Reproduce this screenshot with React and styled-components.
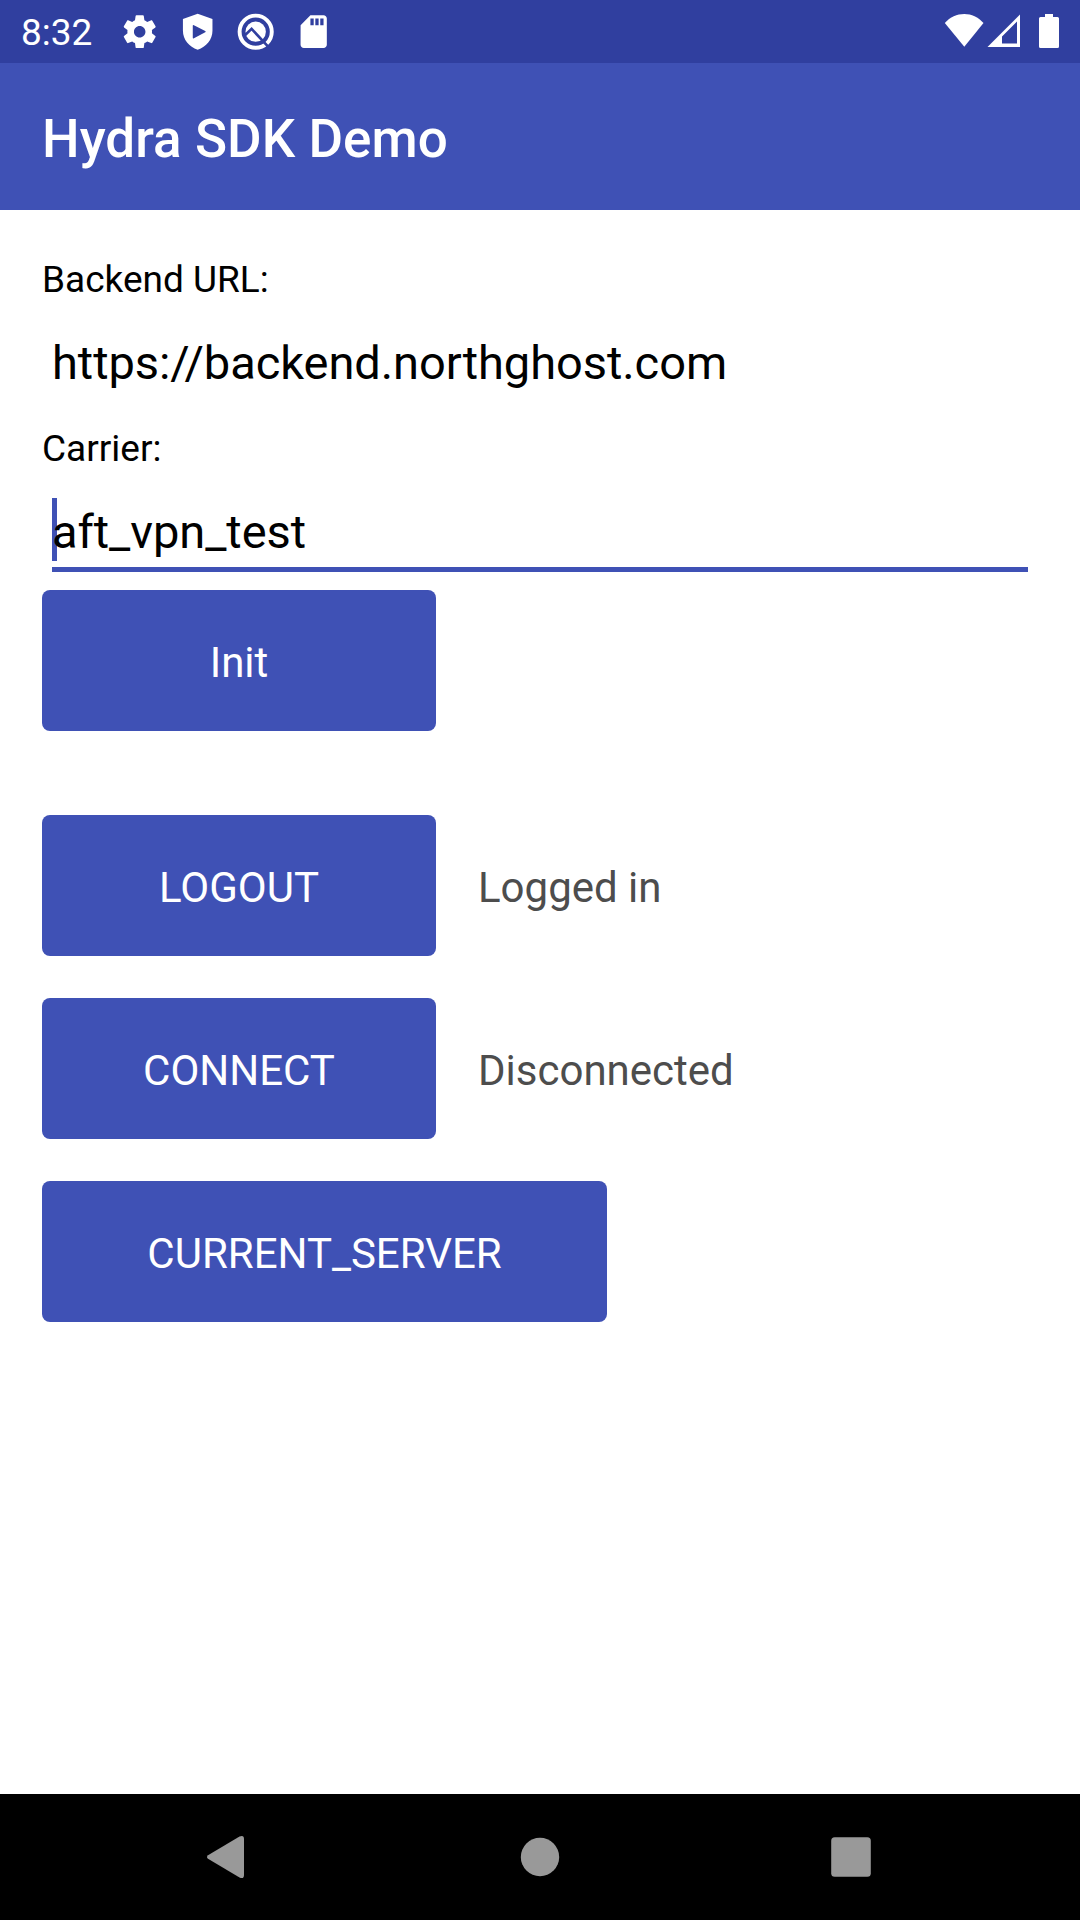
import React from 'react';
import styled, { createGlobalStyle } from 'styled-components';

const indigo = '#3f51b5';
const indigoDark = '#303f9f';

const GlobalStyle = createGlobalStyle`
  *, *::before, *::after { box-sizing: border-box; }
  body {
    margin: 0;
    background: #fff;
    font-family: Roboto, 'Noto Sans', sans-serif;
    overflow: hidden;
  }
`;

const Screen = styled.div`
  display: flex;
  flex-direction: column;
  width: 1080px;
  height: 1920px;
  background: #fff;
`;

const StatusBar = styled.header`
  display: flex;
  align-items: center;
  justify-content: space-between;
  height: 63px;
  padding: 0 20px 0 21px;
  background: ${indigoDark};
  color: #fff;
`;

const StatusGroup = styled.div`
  display: flex;
  align-items: ${(p) => p.$align || 'center'};
`;

const Clock = styled.time`
  width: 99px;
  padding-top: 3px;
  font-size: 37px;
  line-height: 44px;
`;

const NotificationIcons = styled.div`
  display: flex;
  gap: 18.6px;
`;

const StatusIcon = styled.svg`
  display: block;
  width: ${(p) => p.$w || 39.4}px;
  height: ${(p) => p.$h || 39.4}px;
  margin-left: ${(p) => p.$gap || 0}px;
  fill: #fff;
`;

const AppBar = styled.div`
  display: flex;
  align-items: center;
  height: 147px;
  padding: 4px 42px 0;
  background: ${indigo};
`;

const Title = styled.h1`
  margin: 0;
  color: #fff;
  font-size: 53px;
  font-weight: 500;
  line-height: 62px;
  letter-spacing: 0.05px;
`;

const Content = styled.main`
  flex: 1;
  display: flex;
  flex-direction: column;
  align-items: flex-start;
  padding: 45px 42px 0;
`;

const Fields = styled.div`
  display: flex;
  flex-direction: column;
  gap: 21px;
  width: 100%;
  margin-bottom: 18px;
`;

const Field = styled.label`
  display: flex;
  flex-direction: column;
`;

const FieldLabel = styled.span`
  height: 49px;
  color: #000;
  font-size: 37px;
  line-height: 49px;
`;

const FieldValue = styled.span`
  position: relative;
  height: 99px;
  margin: 0 10px;
  padding-top: 27px;
  border-bottom: 5px solid ${(p) => (p.$focused ? indigo : 'transparent')};
  color: #000;
  font-size: 47px;
  line-height: 63px;
  letter-spacing: -0.06px;
`;

const Caret = styled.i`
  position: absolute;
  left: 0;
  bottom: 6px;
  width: 5px;
  height: 63px;
  background: ${indigo};
`;

const FieldText = styled.span`
  position: relative;
`;

const Row = styled.div`
  display: flex;
  align-items: center;
  gap: 42px;
  margin-bottom: ${(p) => p.$after || 42}px;
`;

const Button = styled.button`
  width: ${(p) => (p.$wide ? 565 : 394)}px;
  height: 141px;
  padding: 4px 0 0;
  border: 0;
  border-radius: 8px;
  background: ${indigo};
  color: #fff;
  font: 400 42px/50px Roboto, sans-serif;
`;

const State = styled.span`
  padding-top: 4px;
  color: #4d4d4d;
  font-size: 42px;
  line-height: 50px;
`;

const NavBar = styled.nav`
  display: grid;
  grid-template-columns: 311px 311px 311px;
  justify-content: center;
  align-items: center;
  justify-items: center;
  height: 126px;
  background: #000;
`;

const NavIcon = styled.svg`
  display: block;
  width: 52px;
  height: 52px;
  fill: #999;
`;

export default function App() {
  return (
    <Screen>
      <GlobalStyle />
      <StatusBar>
        <StatusGroup>
          <Clock>8:32</Clock>
          <NotificationIcons>
            <StatusIcon viewBox="0 0 24 24">
              <path d="M19.43 12.98c.04-.32.07-.64.07-.98s-.03-.66-.07-.98l2.11-1.65c.19-.15.24-.42.12-.64l-2-3.46c-.12-.22-.39-.3-.61-.22l-2.49 1c-.52-.4-1.08-.73-1.69-.98l-.38-2.65C14.46 2.18 14.25 2 14 2h-4c-.25 0-.46.18-.49.42l-.38 2.65c-.61.25-1.17.59-1.69.98l-2.49-1c-.23-.09-.49 0-.61.22l-2 3.46c-.13.22-.07.49.12.64l2.11 1.65c-.04.32-.07.65-.07.98s.03.66.07.98l-2.11 1.65c-.19.15-.24.42-.12.64l2 3.46c.12.22.39.3.61.22l2.49-1c.52.4 1.08.73 1.69.98l.38 2.65c.03.24.24.42.49.42h4c.25 0 .46-.18.49-.42l.38-2.65c.61-.25 1.17-.59 1.69-.98l2.49 1c.23.09.49 0 .61-.22l2-3.46c.12-.22.07-.49-.12-.64l-2.11-1.65zM12 15.5c-1.93 0-3.5-1.57-3.5-3.5s1.57-3.5 3.5-3.5 3.5 1.57 3.5 3.5-1.57 3.5-3.5 3.5z" />
            </StatusIcon>
            <StatusIcon viewBox="0 0 24 24">
              <path
                fillRule="evenodd"
                d="M12 1 21 4.3V11.5C21 16.8 17.2 21.5 12 23 6.8 21.5 3 16.8 3 11.5V4.3ZM9 8.4V15.6Q9 16.4 9.7 16L16.6 12.4Q17.2 12 16.6 11.6L9.7 8Q9 7.6 9 8.4Z"
              />
            </StatusIcon>
            <StatusIcon viewBox="0 0 24 24">
              <circle cx="12" cy="12" r="9.8" fill="none" stroke="#fff" strokeWidth="2.4" />
              <circle cx="12" cy="12" r="6.2" />
              <path
                d="M5.600 14 9.500 10.300 20 21.600"
                fill="none"
                stroke={indigoDark}
                strokeWidth="1.6"
              />
            </StatusIcon>
            <StatusIcon viewBox="0 0 24 24">
              <path d="M18 2h-8L4.02 8 4 20c0 1.1.9 2 2 2h12c1.1 0 2-.9 2-2V4c0-1.1-.9-2-2-2zm-6 6h-2V4h2v4zm3 0h-2V4h2v4zm3 0h-2V4h2v4z" />
            </StatusIcon>
          </NotificationIcons>
        </StatusGroup>
        <StatusGroup $align="flex-start">
          <StatusIcon $w={40} $h={33} viewBox="0 0 40 33">
            <path d="M20.300 32.800.8 9C6 3 13 0 20.300 0S34 3 39.500 9Z" />
          </StatusIcon>
          <StatusIcon $w={33} $h={33} $gap={3} viewBox="0 0 33 33">
            <path fillRule="evenodd" d="M.5 33 33 .5V33ZM15 29.500H30V7.500L15 22.500Z" />
          </StatusIcon>
          <StatusIcon $w={22} $h={35} $gap={18} viewBox="0 0 22 35">
            <path d="M7 0H15V3H19.500Q21 3 21 4.500V32.500Q21 34 19.500 34H2.500Q1 34 1 32.500V4.500Q1 3 2.500 3H7Z" />
          </StatusIcon>
        </StatusGroup>
      </StatusBar>

      <AppBar>
        <Title>Hydra SDK Demo</Title>
      </AppBar>

      <Content>
        <Fields>
          <Field>
            <FieldLabel>Backend URL:</FieldLabel>
            <FieldValue>
              <FieldText>https://backend.northghost.com</FieldText>
            </FieldValue>
          </Field>
          <Field>
            <FieldLabel>Carrier:</FieldLabel>
            <FieldValue $focused>
              <Caret />
              <FieldText>aft_vpn_test</FieldText>
            </FieldValue>
          </Field>
        </Fields>

        <Row $after={84}>
          <Button>Init</Button>
        </Row>
        <Row>
          <Button>LOGOUT</Button>
          <State>Logged in</State>
        </Row>
        <Row>
          <Button>CONNECT</Button>
          <State>Disconnected</State>
        </Row>
        <Row>
          <Button $wide>CURRENT_SERVER</Button>
        </Row>
      </Content>

      <NavBar>
        <NavIcon viewBox="0 0 52 52">
          <path d="M5 24.200 36.500 5.500Q41 3.500 41 8V44Q41 48.500 36.500 46.500L5 27.800Q3 26 5 24.200Z" />
        </NavIcon>
        <NavIcon viewBox="0 0 52 52">
          <circle cx="26" cy="26" r="19.200" />
        </NavIcon>
        <NavIcon viewBox="0 0 52 52">
          <rect x="6.200" y="6.200" width="39.600" height="39.600" rx="3.500" />
        </NavIcon>
      </NavBar>
    </Screen>
  );
}
